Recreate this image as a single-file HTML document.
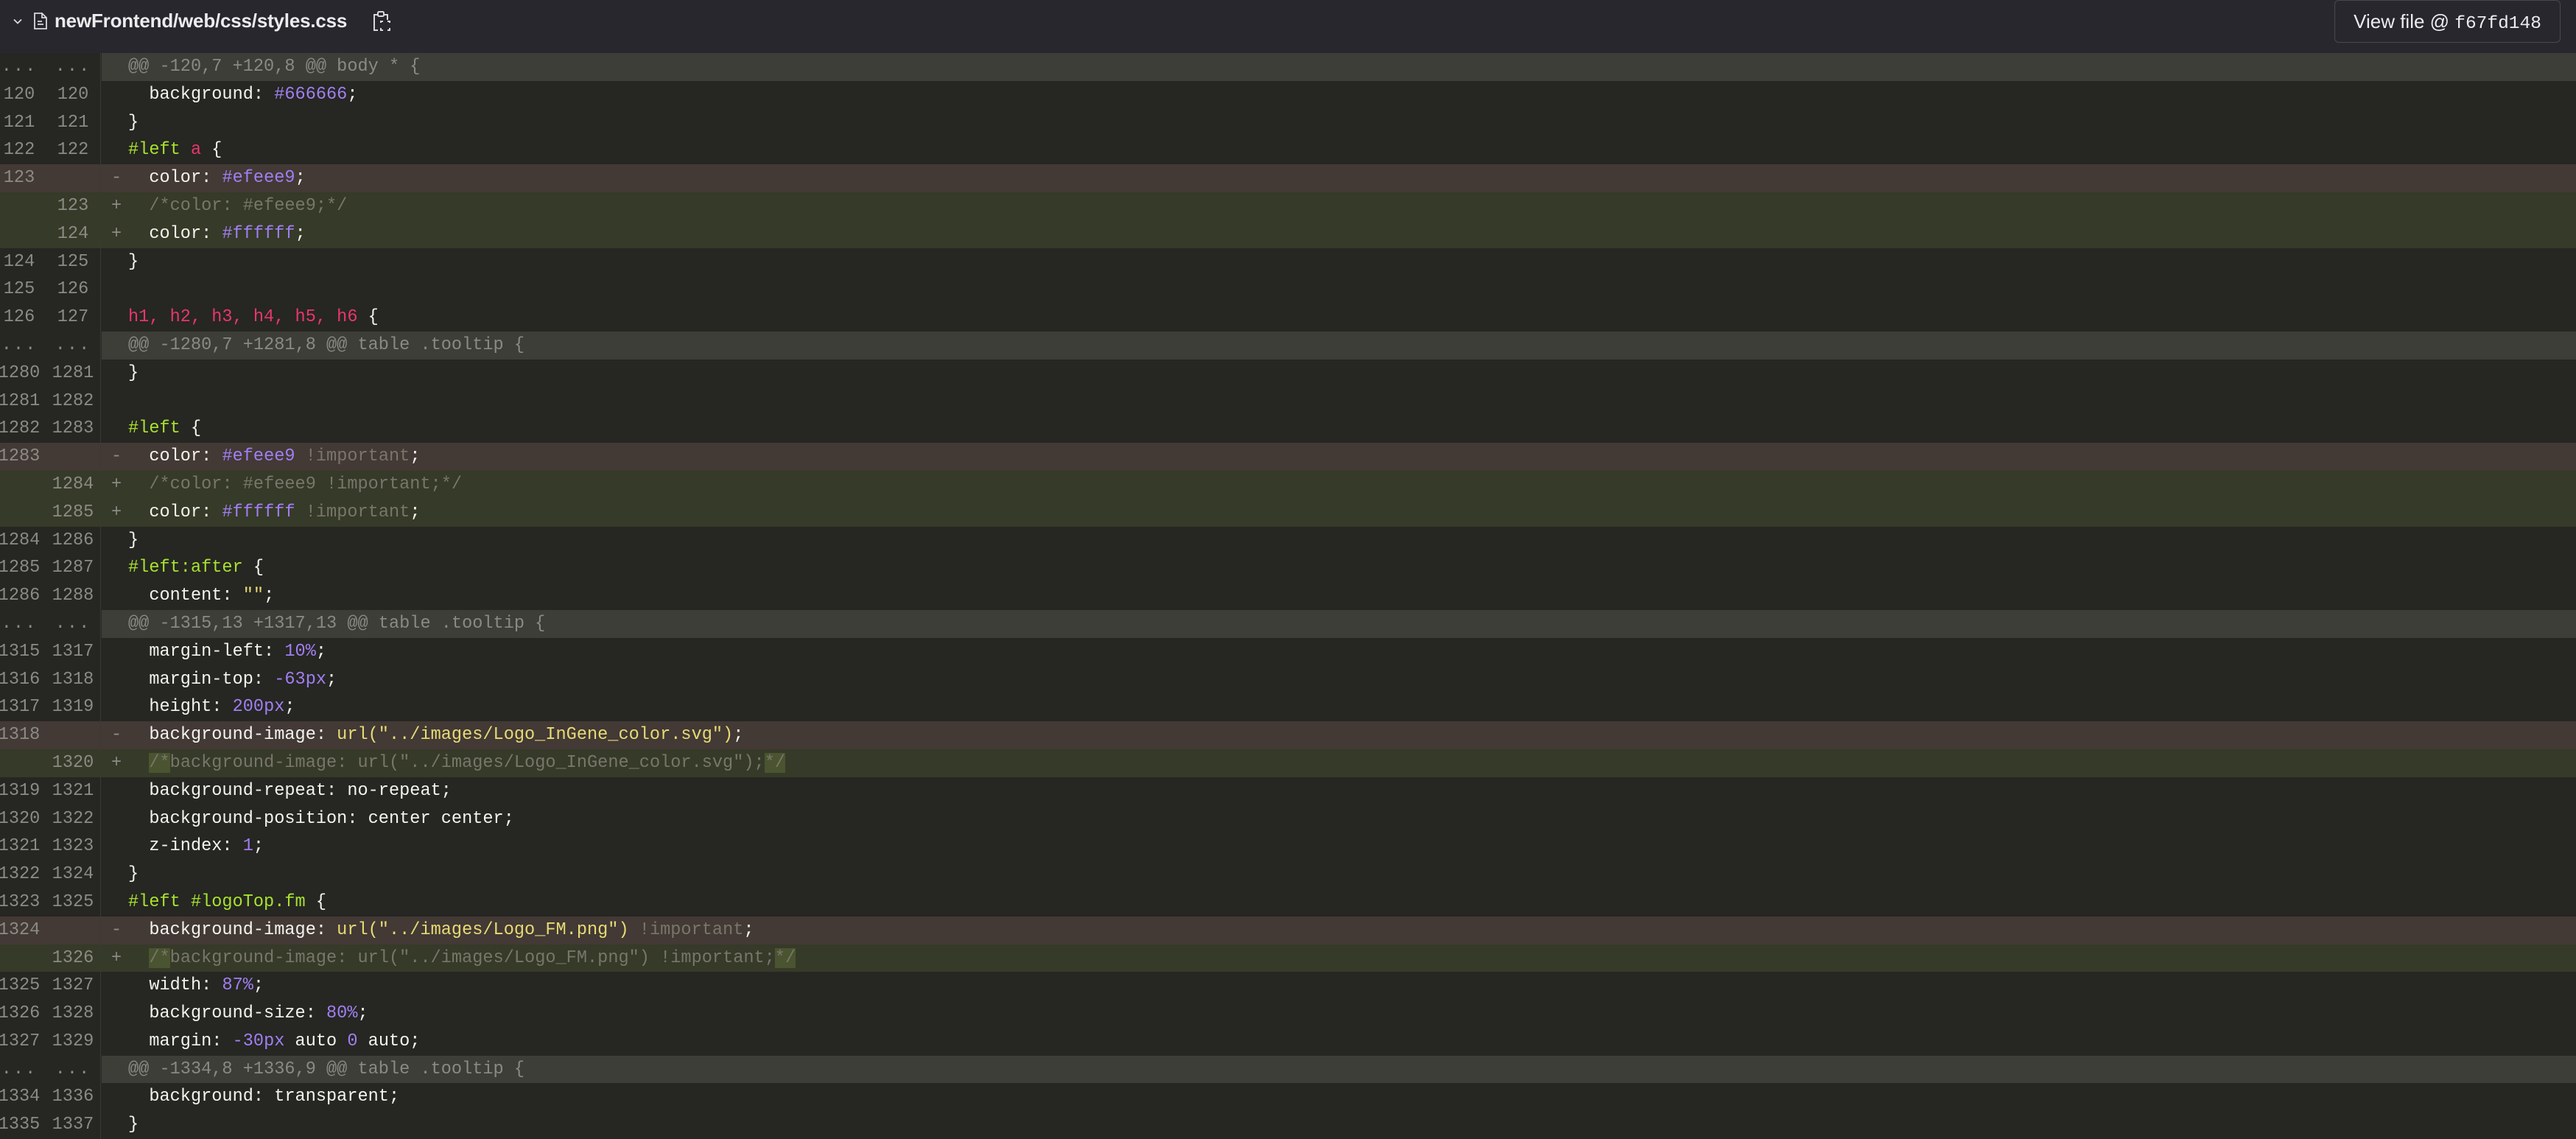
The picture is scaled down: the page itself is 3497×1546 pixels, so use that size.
<!DOCTYPE html>
<html><head><meta charset="utf-8"><style>
*{margin:0;padding:0;box-sizing:border-box}
body{width:3497px;height:1546px;background:#262622;overflow:hidden;position:relative;font-family:"Liberation Sans",sans-serif}
#hdr{position:absolute;left:0;top:0;width:3497px;height:72px;background:#27272d}
#fn{position:absolute;left:74px;top:12px;font-size:26px;font-weight:bold;color:#ececef;line-height:32px;letter-spacing:-0.2px}
#btn{position:absolute;left:3169px;top:0;width:307px;height:58px;border:1.5px solid #48484f;border-radius:6px;color:#ececef;font-size:26px;line-height:56px;text-align:center}
#btn span{font-family:"Liberation Mono",monospace;font-size:24.5px}
#rows{position:absolute;left:0;top:72px;width:3497px}
.r{height:37.8px;position:relative;font-family:"Liberation Mono",monospace;font-size:23.6px;line-height:37.8px;color:#f4f4ee;white-space:pre}
.r .a,.r .b{position:absolute;top:0;width:60px;text-align:center;color:#8b8b85}
.r .a{left:-4px}.r .b{left:69px}
.r .s{position:absolute;left:151px;top:0;color:#8b8b85}
.r .c{position:absolute;left:174px;top:0}
.r .g{position:absolute;left:0;top:0;width:137px;height:100%;border-right:1.5px solid #3a3a35}
.h .c{color:#8a8a84}
.h:after{content:"";position:absolute;left:138px;top:0;right:0;bottom:0;background:#3d3e38;z-index:-1}
.d{background:#433935}.ad{background:#363a28}
.p{color:#a07ff2}.gr{color:#a6e22e}.k{color:#e8366f}.y{color:#e6db74}.m{color:#78766a}
.hl{background:#4a5430}
.h .a,.h .b{letter-spacing:2px}
</style></head><body>
<div id="hdr">
<svg style="position:absolute;left:17px;top:22px" width="14" height="14" viewBox="0 0 14 14"><path d="M2 4.5 L7 9.5 L12 4.5" stroke="#d8d8dc" stroke-width="1.8" fill="none"/></svg>
<svg style="position:absolute;left:45px;top:16px" width="20" height="25" viewBox="0 0 20 25"><path d="M2 2h10l6 6v15H2z M12 2v6h6" stroke="#d8d8dc" stroke-width="1.8" fill="none"/><path d="M6 13h6M6 17h8" stroke="#d8d8dc" stroke-width="1.8"/></svg>
<div id="fn">newFrontend/web/css/styles.css</div>
<svg style="position:absolute;left:506px;top:14px" width="26" height="30" viewBox="0 0 26 30"><path d="M6 6H2v21h5M16 6h4v7" stroke="#d8d8dc" stroke-width="2" fill="none"/><rect x="7" y="2" width="8" height="6" rx="1.5" stroke="#d8d8dc" stroke-width="2" fill="none"/><path d="M11 17v-2h3M20 15h3v2M23 24v3h-3M14 27h-3v-3" stroke="#d8d8dc" stroke-width="2" fill="none"/></svg>
<div id="btn">View file @ <span>f67fd148</span></div>
</div>
<div id="rows">
<div class="r h"><span class="g"></span><span class="a">...</span><span class="b">...</span><span class="c">@@ -120,7 +120,8 @@ body * {</span></div>
<div class="r"><span class="g"></span><span class="a">120</span><span class="b">120</span><span class="c">  background: <span class="p">#666666</span>;</span></div>
<div class="r"><span class="g"></span><span class="a">121</span><span class="b">121</span><span class="c">}</span></div>
<div class="r"><span class="g"></span><span class="a">122</span><span class="b">122</span><span class="c"><span class="gr">#left</span> <span class="k">a</span> {</span></div>
<div class="r d"><span class="g"></span><span class="a">123</span><span class="s">-</span><span class="c">  color: <span class="p">#efeee9</span>;</span></div>
<div class="r ad"><span class="g"></span><span class="b">123</span><span class="s">+</span><span class="c">  <span class="m">/*color: #efeee9;*/</span></span></div>
<div class="r ad"><span class="g"></span><span class="b">124</span><span class="s">+</span><span class="c">  color: <span class="p">#ffffff</span>;</span></div>
<div class="r"><span class="g"></span><span class="a">124</span><span class="b">125</span><span class="c">}</span></div>
<div class="r"><span class="g"></span><span class="a">125</span><span class="b">126</span><span class="c"></span></div>
<div class="r"><span class="g"></span><span class="a">126</span><span class="b">127</span><span class="c"><span class="k">h1, h2, h3, h4, h5, h6</span> {</span></div>
<div class="r h"><span class="g"></span><span class="a">...</span><span class="b">...</span><span class="c">@@ -1280,7 +1281,8 @@ table .tooltip {</span></div>
<div class="r"><span class="g"></span><span class="a">1280</span><span class="b">1281</span><span class="c">}</span></div>
<div class="r"><span class="g"></span><span class="a">1281</span><span class="b">1282</span><span class="c"></span></div>
<div class="r"><span class="g"></span><span class="a">1282</span><span class="b">1283</span><span class="c"><span class="gr">#left</span> {</span></div>
<div class="r d"><span class="g"></span><span class="a">1283</span><span class="s">-</span><span class="c">  color: <span class="p">#efeee9</span> <span class="m">!important</span>;</span></div>
<div class="r ad"><span class="g"></span><span class="b">1284</span><span class="s">+</span><span class="c">  <span class="m">/*color: #efeee9 !important;*/</span></span></div>
<div class="r ad"><span class="g"></span><span class="b">1285</span><span class="s">+</span><span class="c">  color: <span class="p">#ffffff</span> <span class="m">!important</span>;</span></div>
<div class="r"><span class="g"></span><span class="a">1284</span><span class="b">1286</span><span class="c">}</span></div>
<div class="r"><span class="g"></span><span class="a">1285</span><span class="b">1287</span><span class="c"><span class="gr">#left:after</span> {</span></div>
<div class="r"><span class="g"></span><span class="a">1286</span><span class="b">1288</span><span class="c">  content: <span class="y">""</span>;</span></div>
<div class="r h"><span class="g"></span><span class="a">...</span><span class="b">...</span><span class="c">@@ -1315,13 +1317,13 @@ table .tooltip {</span></div>
<div class="r"><span class="g"></span><span class="a">1315</span><span class="b">1317</span><span class="c">  margin-left: <span class="p">10%</span>;</span></div>
<div class="r"><span class="g"></span><span class="a">1316</span><span class="b">1318</span><span class="c">  margin-top: <span class="p">-63px</span>;</span></div>
<div class="r"><span class="g"></span><span class="a">1317</span><span class="b">1319</span><span class="c">  height: <span class="p">200px</span>;</span></div>
<div class="r d"><span class="g"></span><span class="a">1318</span><span class="s">-</span><span class="c">  background-image: <span class="y">url("../images/Logo_InGene_color.svg")</span>;</span></div>
<div class="r ad"><span class="g"></span><span class="b">1320</span><span class="s">+</span><span class="c">  <span class="m"><span class="hl">/*</span>background-image: url("../images/Logo_InGene_color.svg");<span class="hl">*/</span></span></span></div>
<div class="r"><span class="g"></span><span class="a">1319</span><span class="b">1321</span><span class="c">  background-repeat: no-repeat;</span></div>
<div class="r"><span class="g"></span><span class="a">1320</span><span class="b">1322</span><span class="c">  background-position: center center;</span></div>
<div class="r"><span class="g"></span><span class="a">1321</span><span class="b">1323</span><span class="c">  z-index: <span class="p">1</span>;</span></div>
<div class="r"><span class="g"></span><span class="a">1322</span><span class="b">1324</span><span class="c">}</span></div>
<div class="r"><span class="g"></span><span class="a">1323</span><span class="b">1325</span><span class="c"><span class="gr">#left #logoTop.fm</span> {</span></div>
<div class="r d"><span class="g"></span><span class="a">1324</span><span class="s">-</span><span class="c">  background-image: <span class="y">url("../images/Logo_FM.png")</span> <span class="m">!important</span>;</span></div>
<div class="r ad"><span class="g"></span><span class="b">1326</span><span class="s">+</span><span class="c">  <span class="m"><span class="hl">/*</span>background-image: url("../images/Logo_FM.png") !important;<span class="hl">*/</span></span></span></div>
<div class="r"><span class="g"></span><span class="a">1325</span><span class="b">1327</span><span class="c">  width: <span class="p">87%</span>;</span></div>
<div class="r"><span class="g"></span><span class="a">1326</span><span class="b">1328</span><span class="c">  background-size: <span class="p">80%</span>;</span></div>
<div class="r"><span class="g"></span><span class="a">1327</span><span class="b">1329</span><span class="c">  margin: <span class="p">-30px</span> auto <span class="p">0</span> auto;</span></div>
<div class="r h"><span class="g"></span><span class="a">...</span><span class="b">...</span><span class="c">@@ -1334,8 +1336,9 @@ table .tooltip {</span></div>
<div class="r"><span class="g"></span><span class="a">1334</span><span class="b">1336</span><span class="c">  background: transparent;</span></div>
<div class="r"><span class="g"></span><span class="a">1335</span><span class="b">1337</span><span class="c">}</span></div>
</div>
</body></html>
